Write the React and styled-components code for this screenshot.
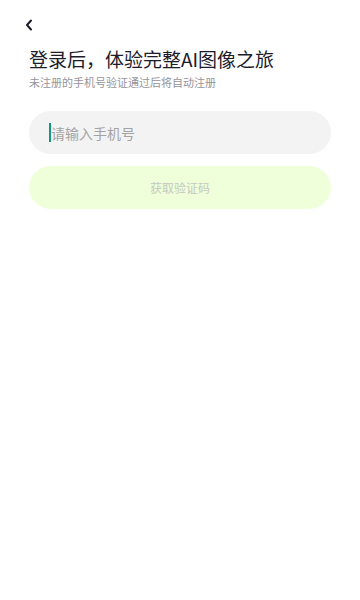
import React from "react";
import styled, { createGlobalStyle } from "styled-components";

const GlobalStyle = createGlobalStyle`
  html, body {
    margin: 0;
    padding: 0;
    background: #ffffff;
  }
  body {
    font-family: "Noto Sans CJK SC", "Noto Sans", sans-serif;
  }
`;

const Page = styled.div`
  width: 360px;
  min-height: 600px;
  background: #fff;
  padding: 0 29px;
  box-sizing: border-box;
`;

const TopBar = styled.div`
  height: 48px;
  display: flex;
  align-items: center;
  margin-left: -7px;
`;

const BackButton = styled.button`
  border: none;
  background: none;
  padding: 0;
  width: 14px;
  height: 14px;
  margin-top: 2px;
  display: flex;
  align-items: center;
  justify-content: center;
  cursor: pointer;
`;

const Title = styled.h1`
  margin: 0;
  font-size: 19px;
  font-weight: 400;
  line-height: 22px;
  color: #1c1c2b;
  letter-spacing: 0;
`;

const Subtitle = styled.p`
  margin: 5px 0 0;
  font-size: 11px;
  line-height: 15px;
  color: #94949c;
`;

const Field = styled.div`
  margin-top: 21px;
  height: 43px;
  border-radius: 22px;
  background: #f3f3f3;
  display: flex;
  align-items: center;
  padding: 0 20px;
`;

const Caret = styled.span`
  width: 2px;
  height: 19px;
  background: #16967c;
  flex-shrink: 0;
`;

const Input = styled.input`
  flex: 1;
  border: none;
  outline: none;
  background: transparent;
  font-family: inherit;
  font-size: 14px;
  color: #333;
  padding: 0;
  caret-color: transparent;
  &::placeholder {
    color: #a3a3a3;
  }
`;

const CodeButton = styled.button`
  margin-top: 12px;
  width: 100%;
  height: 43px;
  border: none;
  border-radius: 22px;
  background: #efffda;
  color: #c4c9bf;
  font-family: inherit;
  font-size: 12px;
  display: flex;
  align-items: center;
  justify-content: center;
  cursor: default;
`;

export default function App() {
  return (
    <>
      <GlobalStyle />
      <Page>
        <TopBar>
          <BackButton aria-label="返回">
            <svg width="8" height="12" viewBox="0 0 8 12">
              <path
                d="M6 1.5 L2 6 L6 10.5"
                fill="none"
                stroke="#1c1c2b"
                strokeWidth="2"
                strokeLinecap="round"
                strokeLinejoin="round"
              />
            </svg>
          </BackButton>
        </TopBar>
        <Title>登录后，体验完整AI图像之旅</Title>
        <Subtitle>未注册的手机号验证通过后将自动注册</Subtitle>
        <Field>
          <Caret />
          <Input placeholder="请输入手机号" />
        </Field>
        <CodeButton disabled>获取验证码</CodeButton>
      </Page>
    </>
  );
}
